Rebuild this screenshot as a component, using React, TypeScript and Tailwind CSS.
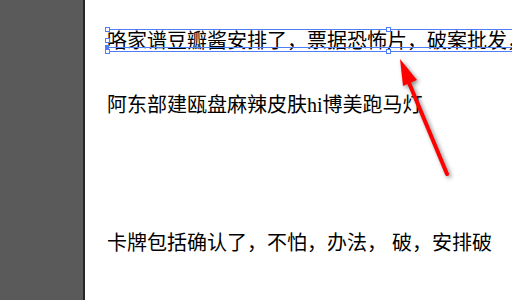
import React from "react";

const font = { fontFamily: '"Liberation Serif", "Noto Sans CJK SC", serif' };

function Handle({ cls }: { cls: string }) {
  return <div className={`absolute w-[5px] h-[5px] bg-white border border-[#4f7cf7] ${cls}`} />;
}

export default function App() {
  return (
    <div className="relative flex w-[512px] h-[300px] overflow-hidden bg-white">
      <div className="w-[83px] h-full bg-[#5a5a5a] border-r-2 border-[#262626] shrink-0 box-content" />
      <div
        className="flex-1 flex flex-col pt-[29px] pl-[22px] text-[20px] leading-[20px] text-black whitespace-nowrap"
        style={font}
      >
        <div className="relative w-[563px] h-[23px] border-y border-[#4f7cf7] shrink-0">
          <div className="pt-[1px]">咯家谱豆瓣酱安排了，票据恐怖片，破案批发，</div>
          <div className="absolute left-0 right-0 top-[17px] h-px bg-[#4f7cf7]" />
          <Handle cls="left-[-2px] top-[-3px]" />
          <Handle cls="left-[-2px] top-[8px]" />
          <Handle cls="left-[-2px] top-[19px]" />
          <div className="absolute left-[-2px] top-[15px] w-[4px] h-[4px] bg-[#4f7cf7]" />
          <Handle cls="left-[279px] top-[-3px]" />
          <Handle cls="left-[279px] top-[19px]" />
        </div>
        <div className="mt-[43px]">阿东部建瓯盘麻辣皮肤hi博美跑马灯</div>
        <div className="mt-[118px]">卡牌包括确认了，不怕，办法， 破，安排破</div>
      </div>
      <svg
        className="absolute left-0 top-0 drop-shadow-[2px_2px_2px_rgba(0,0,0,0.45)]"
        width="512"
        height="300"
        viewBox="0 0 512 300"
      >
        <line x1="447" y1="174" x2="407" y2="78" stroke="#ff0000" strokeWidth="4" strokeLinecap="round" />
        <polygon points="400,59 417,80 403,86" fill="#ff0000" />
      </svg>
    </div>
  );
}
